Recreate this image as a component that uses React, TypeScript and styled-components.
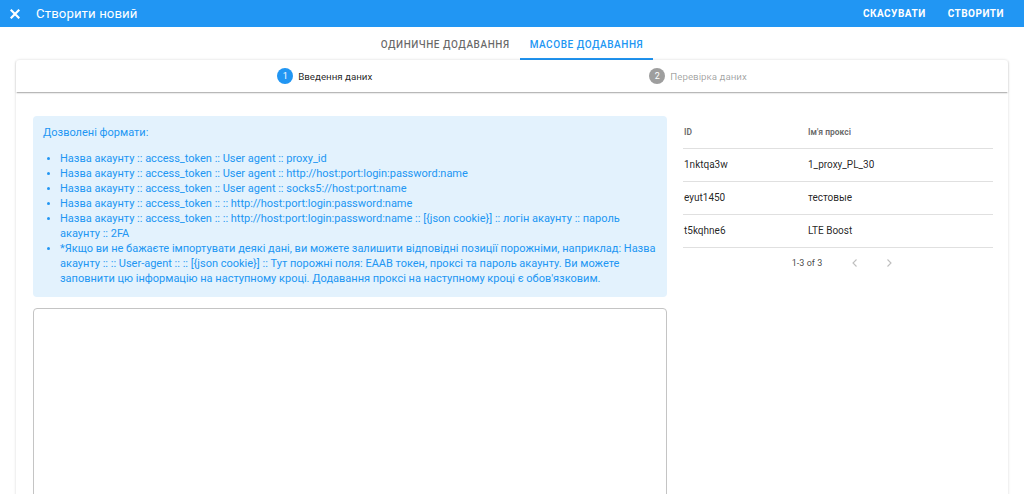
import React from "react";
import styled, { createGlobalStyle } from "styled-components";

const Global = createGlobalStyle`
  html, body { margin: 0; padding: 0; background: #fff; }
  body { font-family: Roboto, "Noto Sans", sans-serif; color: rgba(0,0,0,0.87); overflow: hidden; }
  * { box-sizing: border-box; }
`;

const Page = styled.div`
  width: 1024px;
  height: 494px;
  display: flex;
  flex-direction: column;
  overflow: hidden;
`;

const TopBar = styled.header`
  height: 27px;
  background: #2196f3;
  display: flex;
  align-items: center;
  padding: 0 9px 0 8px;
  color: #fff;
  flex-shrink: 0;
`;

const CloseBtn = styled.button`
  width: 12px;
  height: 12px;
  padding: 0;
  border: 0;
  background: transparent;
  display: flex;
  align-items: center;
  justify-content: center;
  margin-left: 1px;
  cursor: pointer;
`;

const Title = styled.h1`
  margin: 0 0 0 15px;
  font-size: 13.2px;
  font-weight: 400;
  letter-spacing: 0.1px;
  flex: 1;
`;

const BarButton = styled.button`
  border: 0;
  background: transparent;
  color: #fff;
  font-family: Roboto, sans-serif;
  font-size: 10px;
  font-weight: 700;
  letter-spacing: 0.5px;
  text-transform: uppercase;
  padding: 0 11px;
  height: 27px;
  cursor: pointer;
`;

const Tabs = styled.nav`
  height: 33px;
  display: flex;
  justify-content: center;
  flex-shrink: 0;
`;

const Tab = styled.div<{ $active?: boolean }>`
  height: 33px;
  padding: 0 10px;
  display: flex;
  align-items: center;
  font-size: 10px;
  font-weight: 500;
  letter-spacing: 0.55px;
  text-transform: uppercase;
  color: ${(p) => (p.$active ? "#2196f3" : "rgba(0,0,0,0.6)")};
  border-bottom: 2px solid ${(p) => (p.$active ? "#2196f3" : "transparent")};
  padding-top: 3px;
`;

const Card = styled.section`
  margin: 0 16px;
  flex: 1;
  background: #fff;
  border-radius: 4px 4px 0 0;
  box-shadow: 0 0 3px rgba(0,0,0,0.14), 0 1px 1px rgba(0,0,0,0.08);
  display: flex;
  flex-direction: column;
`;

const Stepper = styled.div`
  height: 32px;
  display: flex;
  align-items: center;
  justify-content: center;
  gap: 277px;
  box-shadow: 0 2px 1px -1px rgba(0,0,0,0.2), 0 1px 2px rgba(0,0,0,0.14);
  flex-shrink: 0;
`;

const Step = styled.div<{ $active?: boolean }>`
  display: flex;
  align-items: center;
  gap: 5px;
  font-size: 9.75px;
  color: ${(p) => (p.$active ? "rgba(0,0,0,0.87)" : "rgba(0,0,0,0.38)")};
`;

const StepDot = styled.span<{ $active?: boolean }>`
  width: 16px;
  height: 16px;
  border-radius: 50%;
  background: ${(p) => (p.$active ? "#2196f3" : "#9e9e9e")};
  color: #fff;
  font-size: 9px;
  display: flex;
  align-items: center;
  justify-content: center;
`;

const Body = styled.div`
  display: grid;
  grid-template-columns: 634px 310px;
  gap: 16px;
  padding: 24px 15px 0 17px;
  flex: 1;
  min-height: 0;
`;

const LeftCol = styled.div`
  display: flex;
  flex-direction: column;
  gap: 11px;
`;

const InfoBox = styled.div`
  background: #e3f2fd;
  border-radius: 4px;
  color: #2196f3;
  font-size: 11px;
  line-height: 15px;
  padding: 9px 10px 11px 10px;
`;

const InfoTitle = styled.p`
  margin: 0 0 11px 0;
`;

const FormatList = styled.ul`
  margin: 0;
  padding-left: 17px;
  li::marker { font-size: 10px; }
`;

const Area = styled.textarea`
  width: 100%;
  height: 220px;
  border: 1px solid #c4c4c4;
  border-radius: 4px;
  resize: none;
  outline: none;
  background: #fff;
  font-family: Roboto, sans-serif;
  font-size: 12px;
`;

const Table = styled.table`
  width: 100%;
  border-collapse: collapse;
  font-size: 10px;
  align-self: start;
`;

const Th = styled.th<{ $w?: number }>`
  height: 32px;
  width: ${(p) => (p.$w ? `${p.$w}px` : "auto")};
  text-align: left;
  font-weight: 700;
  font-size: 8.5px;
  color: rgba(0,0,0,0.6);
  padding: 0 0 0 1px;
  border-bottom: 1px solid #e0e0e0;
`;

const Td = styled.td`
  height: 33px;
  padding: 0 0 0 1px;
  border-bottom: 1px solid #e0e0e0;
  color: rgba(0,0,0,0.87);
`;

const Footer = styled.div`
  height: 31px;
  display: flex;
  align-items: center;
  justify-content: center;
  padding-left: 22px;
  font-size: 9px;
  color: rgba(0,0,0,0.75);
`;

const PageLabel = styled.span`
  margin-right: 16px;
`;

const PageBtn = styled.span`
  width: 34px;
  display: flex;
  justify-content: center;
  color: rgba(0,0,0,0.26);
`;

const RightCol = styled.div`
  display: flex;
  flex-direction: column;
`;

const Chevron = ({ dir }: { dir: "l" | "r" }) => (
  <svg width="10" height="10" viewBox="0 0 10 10">
    <path
      d={dir === "l" ? "M6.5 1.5 L3 5 L6.5 8.5" : "M3.5 1.5 L7 5 L3.5 8.5"}
      stroke="currentColor"
      strokeWidth="1.1"
      fill="none"
    />
  </svg>
);

const formats = [
  "Назва акаунту :: access_token :: User agent :: proxy_id",
  "Назва акаунту :: access_token :: User agent :: http://host:port:login:password:name",
  "Назва акаунту :: access_token :: User agent :: socks5://host:port:name",
  "Назва акаунту :: access_token :: :: http://host:port:login:password:name",
  "Назва акаунту :: access_token :: :: http://host:port:login:password:name :: [{json cookie}] :: логін акаунту :: пароль акаунту :: 2FA",
  "*Якщо ви не бажаєте імпортувати деякі дані, ви можете залишити відповідні позиції порожніми, наприклад: Назва акаунту :: :: User-agent :: :: [{json cookie}] :: Тут порожні поля: EAAB токен, проксі та пароль акаунту. Ви можете заповнити цю інформацію на наступному кроці. Додавання проксі на наступному кроці є обов'язковим.",
];

const rows = [
  ["1nktqa3w", "1_proxy_PL_30"],
  ["eyut1450", "тестовые"],
  ["t5kqhne6", "LTE Boost"],
];

export default function App() {
  return (
    <>
      <Global />
      <Page>
        <TopBar>
          <CloseBtn aria-label="close">
            <svg width="10" height="10" viewBox="0 0 10 10">
              <path d="M1.5 1.5 L8.5 8.5 M8.5 1.5 L1.5 8.5" stroke="#fff" strokeWidth="2.2" strokeLinecap="square" />
            </svg>
          </CloseBtn>
          <Title>Створити новий</Title>
          <BarButton>Скасувати</BarButton>
          <BarButton>Створити</BarButton>
        </TopBar>
        <Tabs>
          <Tab>Одиничне додавання</Tab>
          <Tab $active>Масове додавання</Tab>
        </Tabs>
        <Card>
          <Stepper>
            <Step $active>
              <StepDot $active>1</StepDot>
              Введення даних
            </Step>
            <Step>
              <StepDot>2</StepDot>
              Перевірка даних
            </Step>
          </Stepper>
          <Body>
            <LeftCol>
              <InfoBox>
                <InfoTitle>Дозволені формати:</InfoTitle>
                <FormatList>
                  {formats.map((f) => (
                    <li key={f}>{f}</li>
                  ))}
                </FormatList>
              </InfoBox>
              <Area />
            </LeftCol>
            <RightCol>
              <Table>
                <thead>
                  <tr>
                    <Th $w={124}>ID</Th>
                    <Th>Ім'я проксі</Th>
                  </tr>
                </thead>
                <tbody>
                  {rows.map((r) => (
                    <tr key={r[0]}>
                      <Td>{r[0]}</Td>
                      <Td>{r[1]}</Td>
                    </tr>
                  ))}
                </tbody>
              </Table>
              <Footer>
                <PageLabel>1-3 of 3</PageLabel>
                <PageBtn>
                  <Chevron dir="l" />
                </PageBtn>
                <PageBtn>
                  <Chevron dir="r" />
                </PageBtn>
              </Footer>
            </RightCol>
          </Body>
        </Card>
      </Page>
    </>
  );
}
